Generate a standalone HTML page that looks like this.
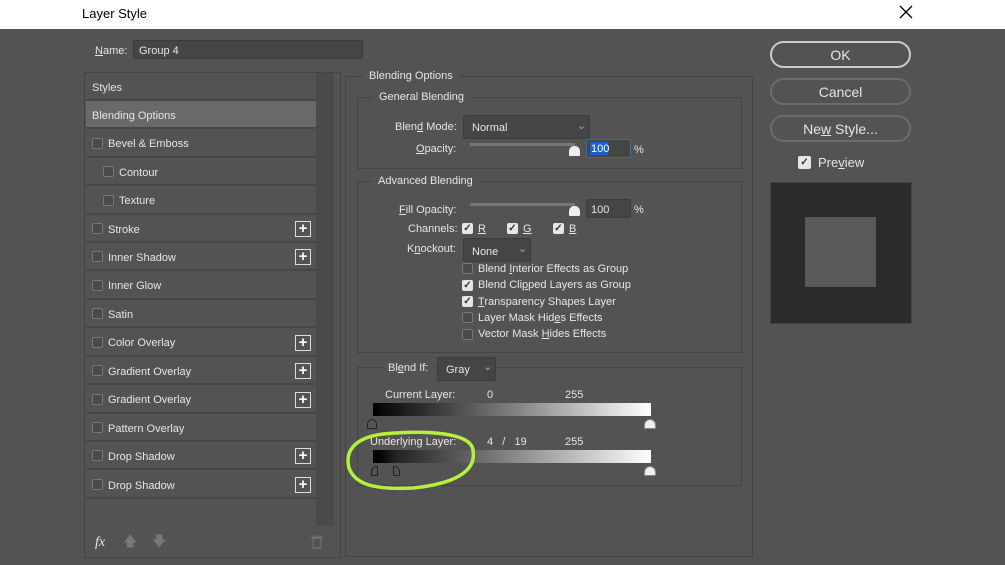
<!DOCTYPE html>
<html><head><style>
*{box-sizing:border-box;margin:0;padding:0}
body{width:1005px;height:565px;background:#535353;font-family:"Liberation Sans",sans-serif;font-size:11px;color:#e6e6e6;position:relative;overflow:hidden}
.a{position:absolute}
.t{position:absolute;white-space:nowrap;line-height:13px;transform:translateY(1px)}
.box{position:absolute;border:1px solid #6a6a6a}
.leg{position:absolute;background:#535353;padding:0 6px;line-height:13px;white-space:nowrap;transform:translateY(1px)}
.row{position:absolute;left:86px;width:230px;height:28px;border-bottom:2px solid #474747}
.cb{position:absolute;width:11px;height:11px;border:1px solid #777;border-radius:2px;background:#4a4a4a}
.cc{position:absolute;width:11px;height:11px;border-radius:2px;background:#e6e6e6;color:#333;font-size:10px;line-height:11px;text-align:center;font-weight:bold}
.plus{position:absolute;left:295px;width:16px;height:16px;border:1px solid #ddd;color:#fff;font-size:15px;line-height:13px;text-align:center;font-weight:bold}
.inp{position:absolute;background:#454545;border:1px solid #3c3c3c;border-radius:2px}
.btn{position:absolute;left:770px;width:141px;height:27px;border:2px solid #6c6c6c;border-radius:14px;text-align:center;line-height:24px;font-size:14px}
</style></head><body>
<div class="a" style="left:0;top:0;width:1005px;height:29px;background:#fff"></div>
<div class="t" style="left:82px;top:6px;color:#000;font-size:13px">Layer Style</div>
<svg class="a" style="left:899px;top:5px" width="14" height="14"><path d="M1 1L13 13M13 1L1 13" stroke="#000" stroke-width="1.3"/></svg>

<div class="t" style="left:95px;top:44px"><u>N</u>ame:</div>
<div class="inp" style="left:133px;top:40px;width:230px;height:19px"></div>
<div class="t" style="left:139px;top:44px">Group 4</div>

<div class="box" style="left:84px;top:72px;width:257px;height:486px;border-color:#444"></div>
<div class="a" style="left:316px;top:73px;width:18px;height:453px;background:#4a4a4a"></div>
<div class="row" style="top:73px"></div><div class="t" style="left:92px;top:81px">Styles</div>
<div class="row" style="top:101px;background:#696969"></div><div class="t" style="left:92px;top:109px">Blending Options</div>
<div class="row" style="top:130px"></div><div class="cb" style="left:92px;top:138px"></div><div class="t" style="left:108px;top:137px">Bevel &amp; Emboss</div>
<div class="row" style="top:158px"></div><div class="cb" style="left:103px;top:166px"></div><div class="t" style="left:119px;top:166px">Contour</div>
<div class="row" style="top:187px"></div><div class="cb" style="left:103px;top:195px"></div><div class="t" style="left:119px;top:194px">Texture</div>
<div class="row" style="top:215px"></div><div class="cb" style="left:92px;top:223px"></div><div class="t" style="left:108px;top:223px">Stroke</div><div class="plus" style="top:221px">+</div>
<div class="row" style="top:243px"></div><div class="cb" style="left:92px;top:251px"></div><div class="t" style="left:108px;top:251px">Inner Shadow</div><div class="plus" style="top:249px">+</div>
<div class="row" style="top:272px"></div><div class="cb" style="left:92px;top:280px"></div><div class="t" style="left:108px;top:279px">Inner Glow</div>
<div class="row" style="top:300px"></div><div class="cb" style="left:92px;top:308px"></div><div class="t" style="left:108px;top:308px">Satin</div>
<div class="row" style="top:329px"></div><div class="cb" style="left:92px;top:337px"></div><div class="t" style="left:108px;top:336px">Color Overlay</div><div class="plus" style="top:335px">+</div>
<div class="row" style="top:357px"></div><div class="cb" style="left:92px;top:365px"></div><div class="t" style="left:108px;top:365px">Gradient Overlay</div><div class="plus" style="top:363px">+</div>
<div class="row" style="top:386px"></div><div class="cb" style="left:92px;top:394px"></div><div class="t" style="left:108px;top:393px">Gradient Overlay</div><div class="plus" style="top:392px">+</div>
<div class="row" style="top:414px"></div><div class="cb" style="left:92px;top:422px"></div><div class="t" style="left:108px;top:422px">Pattern Overlay</div>
<div class="row" style="top:442px"></div><div class="cb" style="left:92px;top:450px"></div><div class="t" style="left:108px;top:450px">Drop Shadow</div><div class="plus" style="top:448px">+</div>
<div class="row" style="top:471px"></div><div class="cb" style="left:92px;top:479px"></div><div class="t" style="left:108px;top:479px">Drop Shadow</div><div class="plus" style="top:477px">+</div>
<div class="t" style="left:95px;top:535px;font-style:italic;font-size:14px;font-family:'Liberation Serif',serif">fx</div>
<div class="t" style="left:123px;top:534px;color:#777;font-size:14px">🡅</div>
<div class="t" style="left:152px;top:534px;color:#777;font-size:14px">🡇</div>
<svg class="a" style="left:311px;top:535px" width="12" height="14"><rect x="2" y="3" width="8" height="10" fill="none" stroke="#777"/><path d="M0 2H12M4 0H8" stroke="#777"/></svg>

<div class="box" style="left:345px;top:76px;width:408px;height:481px;border-color:#444"></div>
<div class="leg" style="left:363px;top:69px">Blending Options</div>
<div class="box" style="left:357px;top:97px;width:385px;height:72px;border-color:#444"></div>
<div class="leg" style="left:373px;top:90px">General Blending</div>
<div class="t" style="left:395px;top:120px">Blen<u>d</u> Mode:</div>
<div class="inp" style="left:463px;top:115px;width:127px;height:24px"></div>
<div class="t" style="left:472px;top:121px">Normal</div>
<div class="t" style="left:577px;top:119px;color:#aaa">⌄</div>
<div class="t" style="left:416px;top:142px"><u>O</u>pacity:</div>
<div class="a" style="left:470px;top:143px;width:105px;height:3px;background:#777"></div>
<div class="a" style="left:569px;top:146px;width:11px;height:10px;background:#eee;border-radius:5px 5px 1px 1px"></div>
<div class="a" style="left:586px;top:139px;width:45px;height:19px;border:1px solid #2a6ccc;background:#454545"></div>
<div class="a" style="left:590px;top:142px;width:18px;height:13px;background:#1e5fcf"></div>
<div class="t" style="left:591px;top:142px;color:#fff">100</div>
<div class="t" style="left:634px;top:143px">%</div>

<div class="box" style="left:357px;top:181px;width:385px;height:172px;border-color:#444"></div>
<div class="leg" style="left:372px;top:174px">Advanced Blending</div>
<div class="t" style="left:399px;top:203px"><u>F</u>ill Opacity:</div>
<div class="a" style="left:470px;top:203px;width:105px;height:3px;background:#777"></div>
<div class="a" style="left:569px;top:206px;width:11px;height:10px;background:#eee;border-radius:5px 5px 1px 1px"></div>
<div class="inp" style="left:586px;top:199px;width:45px;height:19px"></div>
<div class="t" style="left:591px;top:203px">100</div>
<div class="t" style="left:634px;top:203px">%</div>
<div class="t" style="left:408px;top:222px">Channels:</div>
<div class="cc" style="left:462px;top:223px">✓</div><div class="t" style="left:478px;top:222px"><u>R</u></div>
<div class="cc" style="left:507px;top:223px">✓</div><div class="t" style="left:523px;top:222px"><u>G</u></div>
<div class="cc" style="left:553px;top:223px">✓</div><div class="t" style="left:569px;top:222px"><u>B</u></div>
<div class="t" style="left:407px;top:242px">K<u>n</u>ockout:</div>
<div class="inp" style="left:463px;top:238px;width:68px;height:24px"></div>
<div class="t" style="left:472px;top:245px">None</div><div class="t" style="left:518px;top:242px;color:#aaa">⌄</div>
<div class="cb" style="left:462px;top:263px"></div><div class="t" style="left:478px;top:262px">Blend <u>I</u>nterior Effects as Group</div>
<div class="cc" style="left:462px;top:280px">✓</div><div class="t" style="left:478px;top:278px">Blend Cli<u>p</u>ped Layers as Group</div>
<div class="cc" style="left:462px;top:296px">✓</div><div class="t" style="left:478px;top:295px"><u>T</u>ransparency Shapes Layer</div>
<div class="cb" style="left:462px;top:312px"></div><div class="t" style="left:478px;top:311px">Layer Mask Hid<u>e</u>s Effects</div>
<div class="cb" style="left:462px;top:329px"></div><div class="t" style="left:478px;top:327px">Vector Mask <u>H</u>ides Effects</div>

<div class="box" style="left:357px;top:367px;width:385px;height:119px;border-color:#444"></div>
<div class="leg" style="left:382px;top:361px">Bl<u>e</u>nd If:</div>
<div class="inp" style="left:437px;top:357px;width:59px;height:24px"></div>
<div class="t" style="left:446px;top:363px">Gray</div><div class="t" style="left:483px;top:360px;color:#aaa">⌄</div>
<div class="t" style="left:385px;top:388px">Current Layer:</div>
<div class="t" style="left:487px;top:388px">0</div><div class="t" style="left:565px;top:388px">255</div>
<div class="a" style="left:373px;top:403px;width:278px;height:13px;background:linear-gradient(90deg,#000,#fff)"></div>
<div class="a" style="left:367px;top:419px;width:10px;height:10px;border:1px solid #222;background:#555;border-radius:5px 5px 1px 1px"></div>
<div class="a" style="left:644px;top:419px;width:12px;height:10px;background:#eee;border-radius:6px 6px 1px 1px;border:1px solid #888"></div>
<div class="t" style="left:370px;top:435px">Underlying Layer:</div>
<div class="t" style="left:487px;top:435px">4&nbsp;&nbsp;&nbsp;/&nbsp;&nbsp;&nbsp;19</div><div class="t" style="left:565px;top:435px">255</div>
<div class="a" style="left:373px;top:450px;width:278px;height:13px;background:linear-gradient(90deg,#000 2%,#222 8%,#fff)"></div>
<div class="a" style="left:371px;top:466px;width:7px;height:10px;border:1px solid #222;border-radius:6px 0 1px 1px"></div>
<div class="a" style="left:393px;top:466px;width:7px;height:10px;border:1px solid #222;border-radius:0 6px 1px 1px"></div>
<div class="a" style="left:644px;top:466px;width:12px;height:10px;background:#eee;border-radius:6px 6px 1px 1px;border:1px solid #888"></div>
<svg class="a" style="left:343px;top:428px" width="140" height="70"><path d="M130 22C128 4 80 2 40 6C10 10 2 24 6 40C12 56 30 62 70 60C110 56 134 44 130 22" fill="none" stroke="#b4f03c" stroke-width="3.5"/></svg>

<div class="btn" style="top:41px;border-color:#ccc">OK</div>
<div class="btn" style="top:78px">Cancel</div>
<div class="btn" style="top:115px">Ne<u>w</u> Style...</div>
<div class="cc" style="left:798px;top:156px;width:13px;height:13px;line-height:13px">✓</div>
<div class="t" style="left:818px;top:155px;font-size:13px">Pre<u>v</u>iew</div>
<div class="a" style="left:770px;top:182px;width:142px;height:142px;background:#2b2b2b;border:1px solid #444"></div>
<div class="a" style="left:805px;top:217px;width:71px;height:70px;background:#595959"></div>
</body></html>
